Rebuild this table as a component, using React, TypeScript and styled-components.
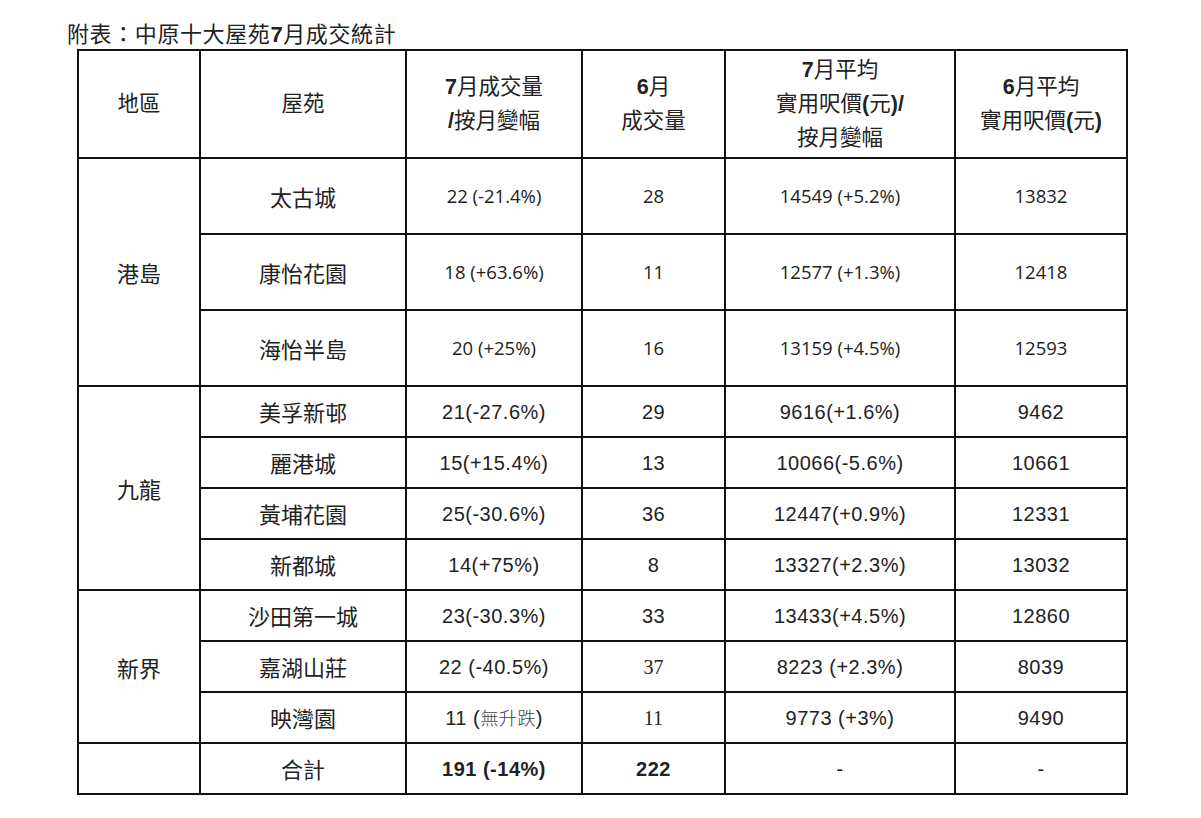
import React from "react";
import styled, { createGlobalStyle, css } from "styled-components";

const Global = createGlobalStyle`
  html, body { margin: 0; padding: 0; background: #ffffff; }
  body { font-family: "Noto Sans CJK TC", sans-serif; color: #222; }
`;

const Page = styled.div`
  padding: 22px 0 0 67px;
`;

const Title = styled.div`
  font-family: "Liberation Sans", "Noto Sans CJK TC", sans-serif;
  font-size: 22px;
  letter-spacing: 0.6px;
  line-height: 26px;
  color: #222;
  margin-bottom: 1px;
`;

const B = styled.span`
  font-weight: bold;
`;

const Table = styled.table`
  margin-left: 10px;
  border-collapse: collapse;
  table-layout: fixed;
  width: 1049px;
  border: 2px solid #111;
`;

const Col = styled.col<{ $w: number }>`
  width: ${(p) => p.$w}px;
`;

const HeadCell = styled.th`
  height: 106px;
  padding: 0;
  border: 2px solid #111;
  font-family: "Liberation Sans", "Noto Sans CJK TC", sans-serif;
  font-weight: normal;
  font-size: 21.5px;
  line-height: 34px;
  color: #222;
  text-align: center;
  vertical-align: middle;
`;

type FontKind = "cjk" | "calibri" | "arial" | "times";

const fonts: Record<FontKind, ReturnType<typeof css>> = {
  cjk: css`
    font-family: "Noto Sans CJK TC", sans-serif;
    font-size: 22px;
  `,
  calibri: css`
    font-family: "Open Sans", "Noto Sans CJK TC", sans-serif;
    font-size: 18.5px;
  `,
  arial: css`
    font-family: "Liberation Sans", "Noto Sans CJK TC", sans-serif;
    font-size: 20px;
    letter-spacing: 0.5px;
  `,
  times: css`
    font-family: "Liberation Serif", serif;
    font-size: 20px;
  `,
};

const Cell = styled.td<{ $f: FontKind; $tall?: boolean; $bold?: boolean }>`
  height: ${(p) => (p.$tall ? 74 : 49)}px;
  padding: 0;
  border: 2px solid #111;
  text-align: center;
  vertical-align: middle;
  color: #222;
  line-height: 1.2;
  font-weight: ${(p) => (p.$bold ? "bold" : "normal")};
  ${(p) => fonts[p.$f]}
`;

const RegionCell = styled.td`
  padding: 0;
  border: 2px solid #111;
  text-align: center;
  vertical-align: middle;
  color: #222;
  font-family: "Noto Sans CJK TC", sans-serif;
  font-size: 22px;
`;

const Light = styled.span`
  font-family: "Noto Sans CJK TC", sans-serif;
  font-weight: 300;
  font-size: 18.5px;
  letter-spacing: 0;
  color: #444;
`;

type Row = {
  name: string;
  vol: React.ReactNode;
  prev: React.ReactNode;
  avg: React.ReactNode;
  prevAvg: React.ReactNode;
  fonts: [FontKind, FontKind, FontKind, FontKind];
};

type Group = { region: string; tall: boolean; rows: Row[] };

const groups: Group[] = [
  {
    region: "港島",
    tall: true,
    rows: [
      { name: "太古城", vol: "22 (-21.4%)", prev: "28", avg: "14549 (+5.2%)", prevAvg: "13832", fonts: ["calibri", "calibri", "calibri", "calibri"] },
      { name: "康怡花園", vol: "18 (+63.6%)", prev: "11", avg: "12577 (+1.3%)", prevAvg: "12418", fonts: ["calibri", "calibri", "calibri", "calibri"] },
      { name: "海怡半島", vol: "20 (+25%)", prev: "16", avg: "13159 (+4.5%)", prevAvg: "12593", fonts: ["calibri", "calibri", "calibri", "calibri"] },
    ],
  },
  {
    region: "九龍",
    tall: false,
    rows: [
      { name: "美孚新邨", vol: "21(-27.6%)", prev: "29", avg: "9616(+1.6%)", prevAvg: "9462", fonts: ["arial", "arial", "arial", "arial"] },
      { name: "麗港城", vol: "15(+15.4%)", prev: "13", avg: "10066(-5.6%)", prevAvg: "10661", fonts: ["arial", "arial", "arial", "arial"] },
      { name: "黃埔花園", vol: "25(-30.6%)", prev: "36", avg: "12447(+0.9%)", prevAvg: "12331", fonts: ["arial", "arial", "arial", "arial"] },
      { name: "新都城", vol: "14(+75%)", prev: "8", avg: "13327(+2.3%)", prevAvg: "13032", fonts: ["arial", "arial", "arial", "arial"] },
    ],
  },
  {
    region: "新界",
    tall: false,
    rows: [
      { name: "沙田第一城", vol: "23(-30.3%)", prev: "33", avg: "13433(+4.5%)", prevAvg: "12860", fonts: ["arial", "arial", "arial", "arial"] },
      { name: "嘉湖山莊", vol: "22 (-40.5%)", prev: "37", avg: "8223 (+2.3%)", prevAvg: "8039", fonts: ["arial", "times", "arial", "arial"] },
      {
        name: "映灣園",
        vol: (
          <>
            11 (<Light>無升跌</Light>)
          </>
        ),
        prev: "11",
        avg: "9773 (+3%)",
        prevAvg: "9490",
        fonts: ["arial", "times", "arial", "arial"],
      },
    ],
  },
];

const widths = [122, 206, 176, 143, 230, 172];

export default function App() {
  return (
    <Page>
      <Global />
      <Title>
        附表：中原十大屋苑<B>7</B>月成交統計
      </Title>
      <Table>
        <colgroup>
          {widths.map((w, i) => (
            <Col key={i} $w={w} />
          ))}
        </colgroup>
        <thead>
          <tr>
            <HeadCell>地區</HeadCell>
            <HeadCell>屋苑</HeadCell>
            <HeadCell>
              <B>7</B>月成交量
              <br />
              <B>/</B>按月變幅
            </HeadCell>
            <HeadCell>
              <B>6</B>月
              <br />
              成交量
            </HeadCell>
            <HeadCell>
              <B>7</B>月平均
              <br />
              實用呎價<B>(</B>元<B>)/</B>
              <br />
              按月變幅
            </HeadCell>
            <HeadCell>
              <B>6</B>月平均
              <br />
              實用呎價<B>(</B>元<B>)</B>
            </HeadCell>
          </tr>
        </thead>
        <tbody>
          {groups.map((g) =>
            g.rows.map((r, i) => (
              <tr key={r.name}>
                {i === 0 && <RegionCell rowSpan={g.rows.length}>{g.region}</RegionCell>}
                <Cell $f="cjk" $tall={g.tall}>{r.name}</Cell>
                <Cell $f={r.fonts[0]} $tall={g.tall}>{r.vol}</Cell>
                <Cell $f={r.fonts[1]} $tall={g.tall}>{r.prev}</Cell>
                <Cell $f={r.fonts[2]} $tall={g.tall}>{r.avg}</Cell>
                <Cell $f={r.fonts[3]} $tall={g.tall}>{r.prevAvg}</Cell>
              </tr>
            ))
          )}
          <tr>
            <RegionCell />
            <Cell $f="cjk">合計</Cell>
            <Cell $f="arial" $bold>191 (-14%)</Cell>
            <Cell $f="arial" $bold>222</Cell>
            <Cell $f="arial">-</Cell>
            <Cell $f="arial">-</Cell>
          </tr>
        </tbody>
      </Table>
    </Page>
  );
}
